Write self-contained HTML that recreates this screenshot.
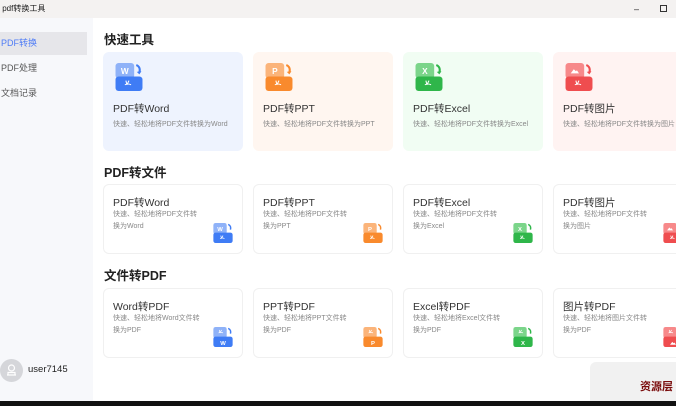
<!DOCTYPE html>
<html><head><meta charset="utf-8"><style>
*{margin:0;padding:0;box-sizing:border-box}
body{width:676px;height:406px;overflow:hidden;position:relative;background:#fff;font-family:"Liberation Sans","Noto Sans CJK SC",sans-serif;color:#333}
.tb{position:absolute;left:0;top:0;width:676px;height:18px;background:#f4f2f1;font-size:8px;line-height:18px;color:#222}
.sb{position:absolute;left:0;top:18px;width:93px;height:383px;background:#f7f8fb}
.nav{position:absolute;left:0;width:87px;height:23px;font-size:9px;line-height:23px;padding-left:1px;color:#555}
.bot{position:absolute;left:0;top:401px;width:676px;height:5px;background:#111}
.h{position:absolute;left:104px;font-size:12.5px;font-weight:bold;color:#222}
.c{position:absolute;width:140px;border-radius:6px;overflow:hidden}
.q{height:99px;top:52px}
.q .t{position:absolute;left:10px;top:49px;font-size:10.5px;color:#333}
.q .d{position:absolute;left:10px;top:67px;font-size:7px;color:#888;white-space:nowrap}
.q svg{position:absolute;left:12px;top:11px}
.s{height:70px;border:1px solid #f0f0f0;background:#fff}
.s .t{position:absolute;left:9px;top:10px;font-size:10.5px;color:#333}
.s .d{position:absolute;left:9px;top:24px;font-size:7px;color:#888;line-height:12px;white-space:nowrap}
.s svg{position:absolute;left:109px;top:38px}
</style></head><body>
<div class="tb">&nbsp;pdf转换工具<span style="position:absolute;left:634px;top:0;font-size:9px">&#8211;</span><span style="position:absolute;left:660px;top:5px;width:7px;height:7px;border:1px solid #333"></span></div>
<div class="sb">
<div class="nav" style="top:14px;background:#e6e6ea;color:#4f7cf6">PDF转换</div>
<div class="nav" style="top:39px">PDF处理</div>
<div class="nav" style="top:64px">文档记录</div>
<div style="position:absolute;left:0;top:341px;width:23px;height:23px;border-radius:50%;background:#d5d6da"><svg width="23" height="23" viewBox="0 0 23 23"><circle cx="11.5" cy="9" r="3" fill="none" stroke="#fff" stroke-width="1.2"/><path d="M7 16h9M8 16v-2.5h7V16" fill="none" stroke="#fff" stroke-width="1.2"/></svg></div>
<div style="position:absolute;left:28px;top:346px;font-size:9.5px;color:#222">user7145</div>
</div>
<div class="h" style="top:29px">快速工具</div>
<div class="h" style="top:162px">PDF转文件</div>
<div class="h" style="top:265px">文件转PDF</div>

<div class="c q" style="left:103px;background:#eef3fe"><svg width="28" height="28" viewBox="0 0 26 27"><rect x="0" y="0" width="18" height="15" rx="3" fill="#8fb2f8"/><rect x="0" y="13" width="26" height="14" rx="3" fill="#3f7cf5"/><text x="9" y="10.5" font-size="8" font-weight="bold" fill="#fff" text-anchor="middle" font-family="Liberation Sans">W</text><path d="M10 17l1 4M13 17l-2 4M9 21c2-1 4-1 6 0" stroke="#fff" stroke-width="1" fill="none"/><path d="M20 2c3 1 4 4 3 7" stroke="#3f7cf5" stroke-width="2" fill="none"/><path d="M20.5 8.5l2.5 2.5 2-3z" fill="#3f7cf5"/></svg><div class="t">PDF转Word</div><div class="d">快速、轻松地将PDF文件转换为Word</div></div>
<div class="c q" style="left:253px;background:#fff6f0"><svg width="28" height="28" viewBox="0 0 26 27"><rect x="0" y="0" width="18" height="15" rx="3" fill="#fbb47a"/><rect x="0" y="13" width="26" height="14" rx="3" fill="#f98a2d"/><text x="9" y="10.5" font-size="8" font-weight="bold" fill="#fff" text-anchor="middle" font-family="Liberation Sans">P</text><path d="M10 17l1 4M13 17l-2 4M9 21c2-1 4-1 6 0" stroke="#fff" stroke-width="1" fill="none"/><path d="M20 2c3 1 4 4 3 7" stroke="#f98a2d" stroke-width="2" fill="none"/><path d="M20.5 8.5l2.5 2.5 2-3z" fill="#f98a2d"/></svg><div class="t">PDF转PPT</div><div class="d">快速、轻松地将PDF文件转换为PPT</div></div>
<div class="c q" style="left:403px;background:#f1fdf3"><svg width="28" height="28" viewBox="0 0 26 27"><rect x="0" y="0" width="18" height="15" rx="3" fill="#7bd58a"/><rect x="0" y="13" width="26" height="14" rx="3" fill="#2fb64a"/><text x="9" y="10.5" font-size="8" font-weight="bold" fill="#fff" text-anchor="middle" font-family="Liberation Sans">X</text><path d="M10 17l1 4M13 17l-2 4M9 21c2-1 4-1 6 0" stroke="#fff" stroke-width="1" fill="none"/><path d="M20 2c3 1 4 4 3 7" stroke="#2fb64a" stroke-width="2" fill="none"/><path d="M20.5 8.5l2.5 2.5 2-3z" fill="#2fb64a"/></svg><div class="t">PDF转Excel</div><div class="d">快速、轻松地将PDF文件转换为Excel</div></div>
<div class="c q" style="left:553px;background:#fff3f2"><svg width="28" height="28" viewBox="0 0 26 27"><rect x="0" y="0" width="18" height="15" rx="3" fill="#f7898a"/><rect x="0" y="13" width="26" height="14" rx="3" fill="#ef4d4f"/><path d="M5 10l3-4 2 2 1-1 2 3z" fill="#fff"/><path d="M10 17l1 4M13 17l-2 4M9 21c2-1 4-1 6 0" stroke="#fff" stroke-width="1" fill="none"/><path d="M20 2c3 1 4 4 3 7" stroke="#ef4d4f" stroke-width="2" fill="none"/><path d="M20.5 8.5l2.5 2.5 2-3z" fill="#ef4d4f"/></svg><div class="t">PDF转图片</div><div class="d">快速、轻松地将PDF文件转换为图片</div></div>

<div class="c s" style="left:103px;top:184px"><div class="t">PDF转Word</div><div class="d">快速、轻松地将PDF文件转<br>换为Word</div><svg width="20" height="20" viewBox="0 0 26 27"><rect width="18" height="15" rx="3" fill="#8fb2f8"/><rect y="13" width="26" height="14" rx="3" fill="#3f7cf5"/><text x="9" y="10.5" font-size="8" font-weight="bold" fill="#fff" text-anchor="middle">W</text><path d="M10 17l1 4M13 17l-2 4M9 21c2-1 4-1 6 0" stroke="#fff" stroke-width="1" fill="none"/><path d="M20 2c3 1 4 4 3 7" stroke="#3f7cf5" stroke-width="2" fill="none"/></svg></div>
<div class="c s" style="left:253px;top:184px"><div class="t">PDF转PPT</div><div class="d">快速、轻松地将PDF文件转<br>换为PPT</div><svg width="20" height="20" viewBox="0 0 26 27"><rect width="18" height="15" rx="3" fill="#fbb47a"/><rect y="13" width="26" height="14" rx="3" fill="#f98a2d"/><text x="9" y="10.5" font-size="8" font-weight="bold" fill="#fff" text-anchor="middle">P</text><path d="M10 17l1 4M13 17l-2 4M9 21c2-1 4-1 6 0" stroke="#fff" stroke-width="1" fill="none"/><path d="M20 2c3 1 4 4 3 7" stroke="#f98a2d" stroke-width="2" fill="none"/></svg></div>
<div class="c s" style="left:403px;top:184px"><div class="t">PDF转Excel</div><div class="d">快速、轻松地将PDF文件转<br>换为Excel</div><svg width="20" height="20" viewBox="0 0 26 27"><rect width="18" height="15" rx="3" fill="#7bd58a"/><rect y="13" width="26" height="14" rx="3" fill="#2fb64a"/><text x="9" y="10.5" font-size="8" font-weight="bold" fill="#fff" text-anchor="middle">X</text><path d="M10 17l1 4M13 17l-2 4M9 21c2-1 4-1 6 0" stroke="#fff" stroke-width="1" fill="none"/><path d="M20 2c3 1 4 4 3 7" stroke="#2fb64a" stroke-width="2" fill="none"/></svg></div>
<div class="c s" style="left:553px;top:184px"><div class="t">PDF转图片</div><div class="d">快速、轻松地将PDF文件转<br>换为图片</div><svg width="20" height="20" viewBox="0 0 26 27"><rect width="18" height="15" rx="3" fill="#f7898a"/><rect y="13" width="26" height="14" rx="3" fill="#ef4d4f"/><path d="M5 10l3-4 2 2 1-1 2 3z" fill="#fff"/><path d="M10 17l1 4M13 17l-2 4M9 21c2-1 4-1 6 0" stroke="#fff" stroke-width="1" fill="none"/><path d="M20 2c3 1 4 4 3 7" stroke="#ef4d4f" stroke-width="2" fill="none"/></svg></div>

<div class="c s" style="left:103px;top:288px"><div class="t">Word转PDF</div><div class="d">快速、轻松地将Word文件转<br>换为PDF</div><svg width="20" height="20" viewBox="0 0 26 27"><rect width="18" height="15" rx="3" fill="#8fb2f8"/><rect y="13" width="26" height="14" rx="3" fill="#3f7cf5"/><path d="M8 4l1 4M11 4l-2 4M7 8c2-1 4-1 6 0" stroke="#fff" stroke-width="1" fill="none"/><text x="13" y="24" font-size="8" font-weight="bold" fill="#fff" text-anchor="middle">W</text><path d="M20 2c3 1 4 4 3 7" stroke="#3f7cf5" stroke-width="2" fill="none"/></svg></div>
<div class="c s" style="left:253px;top:288px"><div class="t">PPT转PDF</div><div class="d">快速、轻松地将PPT文件转<br>换为PDF</div><svg width="20" height="20" viewBox="0 0 26 27"><rect width="18" height="15" rx="3" fill="#fbb47a"/><rect y="13" width="26" height="14" rx="3" fill="#f98a2d"/><path d="M8 4l1 4M11 4l-2 4M7 8c2-1 4-1 6 0" stroke="#fff" stroke-width="1" fill="none"/><text x="13" y="24" font-size="8" font-weight="bold" fill="#fff" text-anchor="middle">P</text><path d="M20 2c3 1 4 4 3 7" stroke="#f98a2d" stroke-width="2" fill="none"/></svg></div>
<div class="c s" style="left:403px;top:288px"><div class="t">Excel转PDF</div><div class="d">快速、轻松地将Excel文件转<br>换为PDF</div><svg width="20" height="20" viewBox="0 0 26 27"><rect width="18" height="15" rx="3" fill="#7bd58a"/><rect y="13" width="26" height="14" rx="3" fill="#2fb64a"/><path d="M8 4l1 4M11 4l-2 4M7 8c2-1 4-1 6 0" stroke="#fff" stroke-width="1" fill="none"/><text x="13" y="24" font-size="8" font-weight="bold" fill="#fff" text-anchor="middle">X</text><path d="M20 2c3 1 4 4 3 7" stroke="#2fb64a" stroke-width="2" fill="none"/></svg></div>
<div class="c s" style="left:553px;top:288px"><div class="t">图片转PDF</div><div class="d">快速、轻松地将图片文件转<br>换为PDF</div><svg width="20" height="20" viewBox="0 0 26 27"><rect width="18" height="15" rx="3" fill="#f7898a"/><rect y="13" width="26" height="14" rx="3" fill="#ef4d4f"/><path d="M8 4l1 4M11 4l-2 4M7 8c2-1 4-1 6 0" stroke="#fff" stroke-width="1" fill="none"/><path d="M9 24l3-4 2 2 1-1 2 3z" fill="#fff"/><path d="M20 2c3 1 4 4 3 7" stroke="#ef4d4f" stroke-width="2" fill="none"/></svg></div>

<div style="position:absolute;left:590px;top:362px;width:86px;height:39px;background:rgba(235,235,235,0.7);border-radius:6px 0 0 0"></div>
<div style="position:absolute;left:640px;top:378px;font-size:11px;font-weight:bold;color:#7a0c0c;white-space:nowrap">资源层</div>
<div class="bot"></div>
</body></html>
